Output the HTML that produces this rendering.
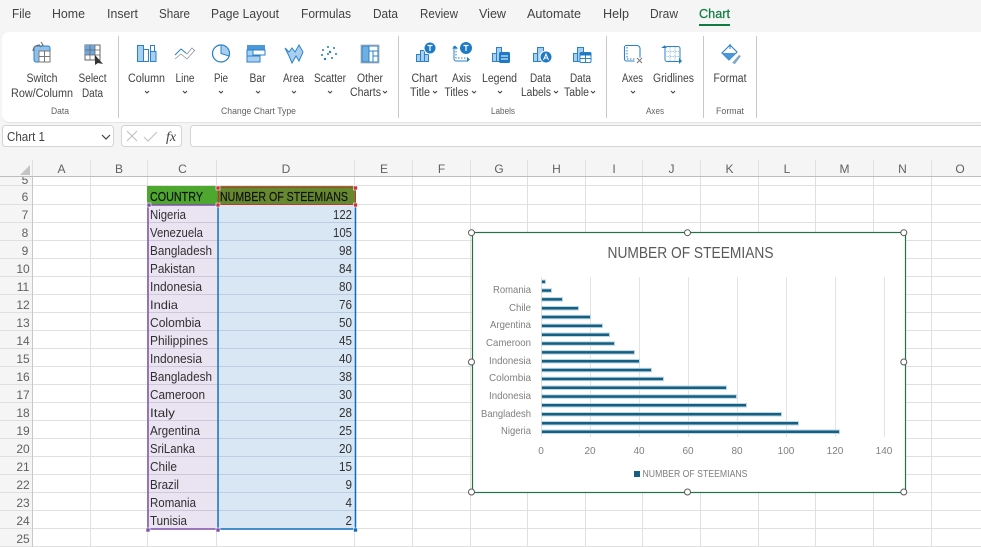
<!DOCTYPE html>
<html lang="en"><head><meta charset="utf-8"><title>Chart</title>
<style>
html,body{margin:0;padding:0;background:#f5f5f5}
svg{display:block}
text{font-family:"Liberation Sans",sans-serif}
.t{font-size:13px;fill:#424242}
.r{font-size:11.5px;fill:#424242;text-anchor:middle}
.g{font-size:9.5px;fill:#616161;text-anchor:middle}
.h{font-size:12px;fill:#616161;text-anchor:middle}
.c{font-size:13px;fill:#303030}
.n{font-size:13px;fill:#303030;text-anchor:end}
.l{font-size:10.5px;fill:#7f7f7f;text-anchor:end}
.a{font-size:10px;fill:#7f7f7f;text-anchor:middle}
.b{fill:#a9cfee;stroke:#2b82cc;stroke-width:1}
.s{fill:none;stroke:#2b82cc;stroke-width:1}
.d{fill:#1f7ac6}
.v{fill:none;stroke:#424242;stroke-width:1}
</style></head><body>
<svg width="981" height="547" viewBox="0 0 981 547" xmlns="http://www.w3.org/2000/svg">
<rect width="981" height="547" fill="#f5f5f5"/>
<!-- tabs -->
<text class="t" x="12" y="18" lengthAdjust="spacingAndGlyphs" textLength="19">File</text>
<text class="t" x="52" y="18" lengthAdjust="spacingAndGlyphs" textLength="33">Home</text>
<text class="t" x="107" y="18" lengthAdjust="spacingAndGlyphs" textLength="31">Insert</text>
<text class="t" x="159" y="18" lengthAdjust="spacingAndGlyphs" textLength="31">Share</text>
<text class="t" x="211" y="18" lengthAdjust="spacingAndGlyphs" textLength="68">Page Layout</text>
<text class="t" x="301" y="18" lengthAdjust="spacingAndGlyphs" textLength="50">Formulas</text>
<text class="t" x="373" y="18" lengthAdjust="spacingAndGlyphs" textLength="25">Data</text>
<text class="t" x="420" y="18" lengthAdjust="spacingAndGlyphs" textLength="38">Review</text>
<text class="t" x="479" y="18" lengthAdjust="spacingAndGlyphs" textLength="27">View</text>
<text class="t" x="527" y="18" lengthAdjust="spacingAndGlyphs" textLength="54">Automate</text>
<text class="t" x="603" y="18" lengthAdjust="spacingAndGlyphs" textLength="26">Help</text>
<text class="t" x="650" y="18" lengthAdjust="spacingAndGlyphs" textLength="28">Draw</text>
<text class="t" x="699" y="18" lengthAdjust="spacingAndGlyphs" textLength="31" style="fill:#107c41;stroke:#107c41;stroke-width:.25">Chart</text>
<rect x="699" y="24" width="31" height="2" fill="#107c41"/>
<!-- ribbon -->
<rect x="2" y="33" width="985" height="90" rx="7" fill="#e4e4e4"/>
<rect x="2" y="32" width="985" height="90" rx="7" fill="#fff"/>
<path d="M118.500 36V118M398.500 36V118M606.500 36V118M703.500 36V118M756.500 36V118" stroke="#c8c8c8"/>
<!-- ribbon labels -->
<text class="r" x="42" y="82" lengthAdjust="spacingAndGlyphs" textLength="31">Switch</text>
<text class="r" x="42" y="97" lengthAdjust="spacingAndGlyphs" textLength="62">Row/Column</text>
<text class="r" x="92.500" y="82" lengthAdjust="spacingAndGlyphs" textLength="28">Select</text>
<text class="r" x="92.500" y="97" lengthAdjust="spacingAndGlyphs" textLength="21">Data</text>
<text class="r" x="146.500" y="82" lengthAdjust="spacingAndGlyphs" textLength="37">Column</text>
<text class="r" x="185" y="82" lengthAdjust="spacingAndGlyphs" textLength="19">Line</text>
<text class="r" x="221" y="82" lengthAdjust="spacingAndGlyphs" textLength="14">Pie</text>
<text class="r" x="257.500" y="82" lengthAdjust="spacingAndGlyphs" textLength="16">Bar</text>
<text class="r" x="293.500" y="82" lengthAdjust="spacingAndGlyphs" textLength="21">Area</text>
<text class="r" x="330" y="82" lengthAdjust="spacingAndGlyphs" textLength="32">Scatter</text>
<text class="r" x="370" y="82" lengthAdjust="spacingAndGlyphs" textLength="26">Other</text>
<text class="r" x="365.500" y="96" lengthAdjust="spacingAndGlyphs" textLength="31">Charts</text>
<text class="r" x="424.500" y="82" lengthAdjust="spacingAndGlyphs" textLength="26">Chart</text>
<text class="r" x="420" y="96" lengthAdjust="spacingAndGlyphs" textLength="20">Title</text>
<text class="r" x="461.500" y="82" lengthAdjust="spacingAndGlyphs" textLength="19">Axis</text>
<text class="r" x="456.500" y="96" lengthAdjust="spacingAndGlyphs" textLength="24">Titles</text>
<text class="r" x="499.500" y="82" lengthAdjust="spacingAndGlyphs" textLength="35">Legend</text>
<text class="r" x="540.500" y="82" lengthAdjust="spacingAndGlyphs" textLength="21">Data</text>
<text class="r" x="536" y="96" lengthAdjust="spacingAndGlyphs" textLength="30">Labels</text>
<text class="r" x="580.500" y="82" lengthAdjust="spacingAndGlyphs" textLength="21">Data</text>
<text class="r" x="576.500" y="96" lengthAdjust="spacingAndGlyphs" textLength="25">Table</text>
<text class="r" x="632.500" y="82" lengthAdjust="spacingAndGlyphs" textLength="21">Axes</text>
<text class="r" x="673.500" y="82" lengthAdjust="spacingAndGlyphs" textLength="41">Gridlines</text>
<text class="r" x="730" y="82" lengthAdjust="spacingAndGlyphs" textLength="33">Format</text>
<text class="g" x="60" y="114" lengthAdjust="spacingAndGlyphs" textLength="18">Data</text>
<text class="g" x="258.500" y="114" lengthAdjust="spacingAndGlyphs" textLength="75">Change Chart Type</text>
<text class="g" x="503" y="114" lengthAdjust="spacingAndGlyphs" textLength="24">Labels</text>
<text class="g" x="655" y="114" lengthAdjust="spacingAndGlyphs" textLength="18">Axes</text>
<text class="g" x="730" y="114" lengthAdjust="spacingAndGlyphs" textLength="28">Format</text>
<!-- chevrons -->
<path class="v" d="M145 91l2 2 2-2M183 91l2 2 2-2M219 91l2 2 2-2M256 91l2 2 2-2M292 91l2 2 2-2M328 91l2 2 2-2M383 91l2 2 2-2M433 91l2 2 2-2M472 91l2 2 2-2M498 91l2 2 2-2M554 91l2 2 2-2M591 91l2 2 2-2M631 91l2 2 2-2M671 91l2 2 2-2"/>
<!-- switch -->
<rect x="34" y="46" width="16" height="16" rx="2" fill="#8fc0ea" stroke="#2b82cc"/>
<rect x="39" y="51" width="11" height="11" fill="#fff" stroke="#777"/><path d="M44.500 51V62M39 56.500H50" stroke="#777"/>
<path d="M33 51c0-4 3-6 7-6M41 42l2 3-3 2" fill="none" stroke="#666"/>
<!-- select -->
<rect x="85" y="45" width="15" height="15" fill="#fff" stroke="#666"/><rect x="85" y="45" width="10" height="10" fill="#6fa8dc"/>
<path d="M90 45V60M95 45V60M85 50H100M85 55H100" stroke="#666" stroke-width=".8"/>
<path d="M95 55l0 10 3-2 5 1z" fill="#333"/>
<!-- column -->
<rect x="137.500" y="45.500" width="6" height="16" class="b"/><rect x="143.500" y="49.500" width="5" height="12" fill="#fff" stroke="#2b82cc"/><rect x="150.500" y="45.500" width="4" height="16" class="s"/><rect x="150.500" y="51.500" width="5.500" height="10" class="b"/>
<!-- line -->
<path d="M175 55l6-6 6 5 5-6 3 3M175 59l6-5 6 5 8-9" fill="none" stroke="#8a96a1" stroke-width=".8"/><path d="M175 55l6-6 5 4" fill="none" stroke="#2b82cc" stroke-width=".9"/>
<!-- pie -->
<circle cx="221" cy="53.500" r="8.500" fill="#fff" stroke="#1f7ac6" stroke-width="1.200"/><path d="M221 53.500V45a8.500 8.500 0 0 1 8 11z" class="b"/>
<!-- bar -->
<rect x="247" y="45" width="18" height="5" fill="#4a97d9"/><rect x="247" y="50" width="6" height="12" fill="#a9cfee" stroke="#2b82cc"/><rect x="253" y="50" width="12" height="5" fill="#fff" stroke="#2b82cc"/><rect x="247" y="56" width="13" height="6" fill="#a9cfee" stroke="#2b82cc"/>
<!-- area -->
<path d="M285 48l4 4 3-4 3 4 4-7 4 7-4 9-3-5-4 7-3-7z" class="b"/>
<!-- scatter -->
<g class="d"><circle cx="323" cy="50" r="1"/><circle cx="328" cy="47" r="1"/><circle cx="334" cy="48" r="1"/><circle cx="330" cy="52" r="1.200"/><circle cx="336" cy="54" r="1"/><circle cx="328" cy="54" r="1"/><circle cx="325" cy="59" r="1.200"/><circle cx="332" cy="58" r="1"/><circle cx="322" cy="55" r="1"/></g>
<!-- other -->
<rect x="361" y="45" width="18" height="18" fill="#fff" stroke="#bbb"/><rect x="362" y="46" width="16" height="16" fill="#fff" stroke="#2b82cc"/><rect x="362" y="46" width="7" height="16" fill="#6fb0e4" stroke="#2b82cc"/><path d="M369 51H378M373 51V62M373 56H378" stroke="#2b82cc"/>
<!-- chart title -->
<path d="M416.500 61.500v-7h4v7zM420.500 61.500v-11h4v11zM424.500 61.500v-7h4v7z" class="b"/><circle cx="430" cy="48" r="6" fill="#1f7ac6" stroke="#fff"/><path d="M427.500 45.500h5M430 45.500v5.500" stroke="#fff" stroke-width="1.200"/>
<!-- axis titles -->
<path d="M454 46v13a2 2 0 0 0 2 2h11" class="s"/><path d="M456 48v10h10" fill="none" stroke="#2b82cc" stroke-dasharray="1.500 1.500"/><path d="M455 45.500l3 3h-6zM467 57l3 2.500-3 2.500z" class="d"/><circle cx="466" cy="48" r="6" fill="#1f7ac6"/><path d="M463.500 45.500h5M466 45.500v5.500" stroke="#fff" stroke-width="1.200"/>
<!-- legend -->
<path d="M492.500 61.500v-8h4v8zM496.500 61.500v-14h5v14z" class="b"/><rect x="499" y="52" width="11" height="11" rx="1.500" fill="#1f7ac6"/><path d="M501 56h7M501 59h7" stroke="#fff"/>
<!-- data labels -->
<path d="M533.500 61.500v-8h4v8zM537.500 61.500v-14h6v14z" class="b"/><circle cx="546" cy="57" r="6" fill="#1f7ac6" stroke="#fff"/><path d="M543.500 60l2.500-6 2.500 6M544.500 58h3" stroke="#fff" fill="none"/>
<!-- data table -->
<path d="M573.500 61.500v-8h4v8zM577.500 61.500v-14h6v14z" class="b"/><rect x="580" y="52.500" width="11" height="10" rx="1" fill="#fff" stroke="#2b82cc"/><rect x="580" y="52.500" width="11" height="3" fill="#1f7ac6"/><path d="M585.500 55V62M580 58.500H591" stroke="#2b82cc"/>
<!-- axes -->
<path d="M625 45.500h12a3 3 0 0 1 3 3v9M624.500 46v13a2 2 0 0 0 2 2h8" fill="none" stroke="#2b82cc" stroke-width="1.100"/><path d="M627 47v12h9" fill="none" stroke="#2b82cc" stroke-dasharray="1.500 1.500"/><path d="M637 58l5 5M642 58l-5 5" stroke="#777"/>
<!-- gridlines -->
<rect x="665" y="46.500" width="15" height="15" rx="2" fill="#fff" stroke="#2b82cc"/><path d="M670 47v14M675 47v14M665 51.500h15M665 56.500h15" stroke="#9cc6ea" stroke-dasharray="1.500 1"/><path d="M664 46v-1l3 3h-6zM679 58l3 3-3 3z" fill="#1f7ac6"/>
<!-- format -->
<path d="M730 45l-8 8 7 7 8-8z" fill="#fff" stroke="#2b82cc" stroke-width="1.100"/><path d="M722 53h15l-8 7z" fill="#4a97d9"/><path d="M730 44v5" stroke="#2b82cc"/><path d="M732 63l7-8 2 1-6 8z" fill="#7fa8c9"/>

<!-- formula bar -->
<rect x="2.500" y="125.500" width="111" height="21" rx="3" fill="#fff" stroke="#d4d4d4"/>
<text x="7" y="141" lengthAdjust="spacingAndGlyphs" textLength="38" style="font-size:12.500px;fill:#424242">Chart 1</text>
<path d="M102 135l4 4 4-4" fill="none" stroke="#424242" stroke-width="1.200"/>
<rect x="121.500" y="125.500" width="60" height="21" rx="3" fill="#fff" stroke="#d4d4d4"/>
<path d="M127 131l10 10M137 131l-10 10M144 137l4 4 9-9" fill="none" stroke="#c4c4c4" stroke-width="1.200"/>
<text x="166" y="141" style="font-family:'Liberation Serif',serif;font-style:italic;font-size:14px;fill:#424242">fx</text>
<rect x="190.500" y="125.500" width="800" height="21" rx="3" fill="#fff" stroke="#d4d4d4"/>

<!-- grid -->
<rect x="0" y="177" width="981" height="370" fill="#fff"/>
<rect x="0" y="177" width="33" height="370" fill="#f5f5f5"/>
<path d="M20 175h10v-10z" fill="#c4c4c4"/>
<path d="M32.500 160V547M90.500 160V547M147.500 160V547M216.500 160V547M354.500 160V547M412.500 160V547M470.500 160V547M527.500 160V547M585.500 160V547M642.500 160V547M700.500 160V547M758.500 160V547M815.500 160V547M873.500 160V547M931.500 160V547" stroke="#e0e0e0"/>
<path d="M0 185.500H981M0 204.500H981M0 222.500H981M0 240.500H981M0 258.500H981M0 276.500H981M0 294.500H981M0 312.500H981M0 330.500H981M0 348.500H981M0 366.500H981M0 384.500H981M0 402.500H981M0 420.500H981M0 438.500H981M0 456.500H981M0 474.500H981M0 492.500H981M0 510.500H981M0 528.500H981M0 546.500H981" stroke="#e0e0e0"/>
<path d="M0 176.500H981" stroke="#bdbdbd"/>
<path d="M32.500 177V547" stroke="#c8c8c8"/>
<text class="h" x="61.500" y="173">A</text><text class="h" x="119" y="173">B</text><text class="h" x="182.500" y="173">C</text><text class="h" x="286" y="173">D</text><text class="h" x="384" y="173">E</text><text class="h" x="441.500" y="173">F</text><text class="h" x="499" y="173">G</text><text class="h" x="556.500" y="173">H</text><text class="h" x="614" y="173">I</text><text class="h" x="671.500" y="173">J</text><text class="h" x="729.500" y="173">K</text><text class="h" x="787" y="173">L</text><text class="h" x="844.500" y="173">M</text><text class="h" x="902.500" y="173">N</text><text class="h" x="960" y="173">O</text>
<svg x="0" y="177" width="33" height="8"><text class="h" x="25" y="7">5</text></svg>
<text class="h" x="25" y="201">6</text><text class="h" x="25" y="219">7</text><text class="h" x="25" y="237">8</text><text class="h" x="25" y="255">9</text><text class="h" x="23" y="273">10</text><text class="h" x="23" y="291">11</text><text class="h" x="23" y="309">12</text><text class="h" x="23" y="327">13</text><text class="h" x="23" y="345">14</text><text class="h" x="23" y="363">15</text><text class="h" x="23" y="381">16</text><text class="h" x="23" y="399">17</text><text class="h" x="23" y="417">18</text><text class="h" x="23" y="435">19</text><text class="h" x="23" y="453">20</text><text class="h" x="23" y="471">21</text><text class="h" x="23" y="489">22</text><text class="h" x="23" y="507">23</text><text class="h" x="23" y="525">24</text><text class="h" x="23" y="543">25</text>
<!-- cells -->
<rect x="147" y="186" width="70" height="19" fill="#4ea72e"/>
<rect x="217" y="186" width="138" height="19" fill="#66892f"/>
<rect x="148" y="205" width="69" height="324" fill="#eae3f2"/>
<rect x="218" y="205" width="137" height="324" fill="#d9e7f5"/>
<path d="M148 222.500H217M148 240.500H217M148 258.500H217M148 276.500H217M148 294.500H217M148 312.500H217M148 330.500H217M148 348.500H217M148 366.500H217M148 384.500H217M148 402.500H217M148 420.500H217M148 438.500H217M148 456.500H217M148 474.500H217M148 492.500H217M148 510.500H217" stroke="#ccc8d8"/>
<path d="M218 222.500H355M218 240.500H355M218 258.500H355M218 276.500H355M218 294.500H355M218 312.500H355M218 330.500H355M218 348.500H355M218 366.500H355M218 384.500H355M218 402.500H355M218 420.500H355M218 438.500H355M218 456.500H355M218 474.500H355M218 492.500H355M218 510.500H355" stroke="#bccfe0"/>
<text class="c" x="150" y="201" lengthAdjust="spacingAndGlyphs" textLength="53" style="fill:#111;stroke:#111;stroke-width:.2">COUNTRY</text>
<text class="c" x="220" y="201" lengthAdjust="spacingAndGlyphs" textLength="128" style="fill:#111;stroke:#111;stroke-width:.2">NUMBER OF STEEMIANS</text>
<text class="c" x="150" y="219" lengthAdjust="spacingAndGlyphs" textLength="36">Nigeria</text><text class="c" x="150" y="237" lengthAdjust="spacingAndGlyphs" textLength="53">Venezuela</text><text class="c" x="150" y="255" lengthAdjust="spacingAndGlyphs" textLength="62">Bangladesh</text><text class="c" x="150" y="273" lengthAdjust="spacingAndGlyphs" textLength="45">Pakistan</text><text class="c" x="150" y="291" lengthAdjust="spacingAndGlyphs" textLength="52">Indonesia</text><text class="c" x="150" y="309" lengthAdjust="spacingAndGlyphs" textLength="28" style="font-size:12px">India</text><text class="c" x="150" y="327" lengthAdjust="spacingAndGlyphs" textLength="51">Colombia</text><text class="c" x="150" y="345" lengthAdjust="spacingAndGlyphs" textLength="58">Philippines</text><text class="c" x="150" y="363" lengthAdjust="spacingAndGlyphs" textLength="52">Indonesia</text><text class="c" x="150" y="381" lengthAdjust="spacingAndGlyphs" textLength="62">Bangladesh</text><text class="c" x="150" y="399" lengthAdjust="spacingAndGlyphs" textLength="55">Cameroon</text><text class="c" x="150" y="417" lengthAdjust="spacingAndGlyphs" textLength="25" style="font-size:12px">Italy</text><text class="c" x="150" y="435" lengthAdjust="spacingAndGlyphs" textLength="50">Argentina</text><text class="c" x="150" y="453" lengthAdjust="spacingAndGlyphs" textLength="45">SriLanka</text><text class="c" x="150" y="471" lengthAdjust="spacingAndGlyphs" textLength="27">Chile</text><text class="c" x="150" y="489" lengthAdjust="spacingAndGlyphs" textLength="29">Brazil</text><text class="c" x="150" y="507" lengthAdjust="spacingAndGlyphs" textLength="46">Romania</text><text class="c" x="150" y="525" lengthAdjust="spacingAndGlyphs" textLength="37">Tunisia</text>
<text class="n" x="352" y="219" lengthAdjust="spacingAndGlyphs" textLength="19">122</text><text class="n" x="352" y="237" lengthAdjust="spacingAndGlyphs" textLength="19">105</text><text class="n" x="352" y="255" lengthAdjust="spacingAndGlyphs" textLength="13">98</text><text class="n" x="352" y="273" lengthAdjust="spacingAndGlyphs" textLength="13">84</text><text class="n" x="352" y="291" lengthAdjust="spacingAndGlyphs" textLength="13">80</text><text class="n" x="352" y="309" lengthAdjust="spacingAndGlyphs" textLength="13">76</text><text class="n" x="352" y="327" lengthAdjust="spacingAndGlyphs" textLength="13">50</text><text class="n" x="352" y="345" lengthAdjust="spacingAndGlyphs" textLength="13">45</text><text class="n" x="352" y="363" lengthAdjust="spacingAndGlyphs" textLength="13">40</text><text class="n" x="352" y="381" lengthAdjust="spacingAndGlyphs" textLength="13">38</text><text class="n" x="352" y="399" lengthAdjust="spacingAndGlyphs" textLength="13">30</text><text class="n" x="352" y="417" lengthAdjust="spacingAndGlyphs" textLength="13">28</text><text class="n" x="352" y="435" lengthAdjust="spacingAndGlyphs" textLength="13">25</text><text class="n" x="352" y="453" lengthAdjust="spacingAndGlyphs" textLength="13">20</text><text class="n" x="352" y="471" lengthAdjust="spacingAndGlyphs" textLength="13">15</text><text class="n" x="352" y="489" lengthAdjust="spacingAndGlyphs" textLength="6.500">9</text><text class="n" x="352" y="507" lengthAdjust="spacingAndGlyphs" textLength="6.500">4</text><text class="n" x="352" y="525" lengthAdjust="spacingAndGlyphs" textLength="6.500">2</text>
<!-- selection borders -->
<path d="M218.500 187.500H355.500V204.500H218.500Z" fill="none" stroke="#c0392b"/>
<path d="M147 205H217M148 205V529H217" fill="none" stroke="#7f4fa9" stroke-width="1.500"/>
<path d="M218 205V529H355.500V205" fill="none" stroke="#0f6cbd" stroke-width="1.500"/>
<g fill="#c8323c" stroke="#fff" stroke-width=".6"><rect x="216" y="186" width="4" height="4"/><rect x="353.500" y="186" width="4" height="4"/><rect x="216" y="203" width="4" height="4"/><rect x="353.500" y="203" width="4" height="4"/></g>
<g fill="#7f4fa9" stroke="#fff" stroke-width=".6"><rect x="147" y="203" width="4" height="4"/><rect x="146" y="528" width="4" height="4"/><rect x="216" y="528" width="4" height="4"/></g>
<rect x="353.500" y="528" width="4" height="4" fill="#0f6cbd" stroke="#fff" stroke-width=".6"/>

<!-- chart -->
<rect x="472.500" y="232.500" width="433" height="260" fill="#fff" stroke="#217346" stroke-width="1.200"/>
<text x="607.500" y="258" lengthAdjust="spacingAndGlyphs" textLength="166" style="font-size:16px;fill:#595959">NUMBER OF STEEMIANS</text>
<path d="M541.500 277V437M590.500 277V437M639.500 277V437M688.500 277V437M737.500 277V437M786.500 277V437M835.500 277V437M884.500 277V437" stroke="#e3e3e3"/>
<g fill="#156082" stroke="#bcd6e3" stroke-width="1">
<rect x="541.500" y="430" width="298" height="3.500"/>
<rect x="541.500" y="421.500" width="257" height="3.500"/>
<rect x="541.500" y="412.500" width="240" height="3.500"/>
<rect x="541.500" y="403.500" width="205" height="3.500"/>
<rect x="541.500" y="394.800" width="195" height="3.500"/>
<rect x="541.500" y="386" width="185" height="3.500"/>
<rect x="541.500" y="377.200" width="122" height="3.500"/>
<rect x="541.500" y="368.300" width="110" height="3.500"/>
<rect x="541.500" y="359.500" width="98" height="3.500"/>
<rect x="541.500" y="350.600" width="93" height="3.500"/>
<rect x="541.500" y="341.800" width="73" height="3.500"/>
<rect x="541.500" y="333" width="68" height="3.500"/>
<rect x="541.500" y="324.100" width="61" height="3.500"/>
<rect x="541.500" y="315.300" width="49" height="3.500"/>
<rect x="541.500" y="306.500" width="37" height="3.500"/>
<rect x="541.500" y="297.600" width="21" height="3.500"/>
<rect x="541.500" y="288.800" width="10" height="3.500"/>
<rect x="541.500" y="280" width="4" height="3.500"/>
</g>
<text class="l" x="531" y="293" lengthAdjust="spacingAndGlyphs" textLength="38">Romania</text><text class="l" x="531" y="311" lengthAdjust="spacingAndGlyphs" textLength="22">Chile</text><text class="l" x="531" y="328" lengthAdjust="spacingAndGlyphs" textLength="41">Argentina</text><text class="l" x="531" y="346" lengthAdjust="spacingAndGlyphs" textLength="45">Cameroon</text><text class="l" x="531" y="364" lengthAdjust="spacingAndGlyphs" textLength="42">Indonesia</text><text class="l" x="531" y="381" lengthAdjust="spacingAndGlyphs" textLength="42">Colombia</text><text class="l" x="531" y="399" lengthAdjust="spacingAndGlyphs" textLength="42">Indonesia</text><text class="l" x="531" y="417" lengthAdjust="spacingAndGlyphs" textLength="50">Bangladesh</text><text class="l" x="531" y="434" lengthAdjust="spacingAndGlyphs" textLength="30">Nigeria</text>
<text class="a" x="541" y="454">0</text><text class="a" x="590" y="454">20</text><text class="a" x="639" y="454">40</text><text class="a" x="688" y="454">60</text><text class="a" x="737" y="454">80</text><text class="a" x="786" y="454">100</text><text class="a" x="835" y="454">120</text><text class="a" x="884" y="454">140</text>
<rect x="634" y="471" width="6" height="6" fill="#156082"/>
<text x="642.500" y="477" lengthAdjust="spacingAndGlyphs" textLength="105" style="font-size:10px;fill:#7f7f7f">NUMBER OF STEEMIANS</text>
<g fill="#fff" stroke="#595959" stroke-width="1"><circle cx="471.500" cy="232.700" r="3"/><circle cx="687.500" cy="232.700" r="3"/><circle cx="903.800" cy="232.700" r="3"/><circle cx="471.500" cy="362" r="3"/><circle cx="903.800" cy="362" r="3"/><circle cx="471.500" cy="492" r="3"/><circle cx="687.500" cy="492" r="3"/><circle cx="903.800" cy="492" r="3"/></g>
</svg>
</body></html>
